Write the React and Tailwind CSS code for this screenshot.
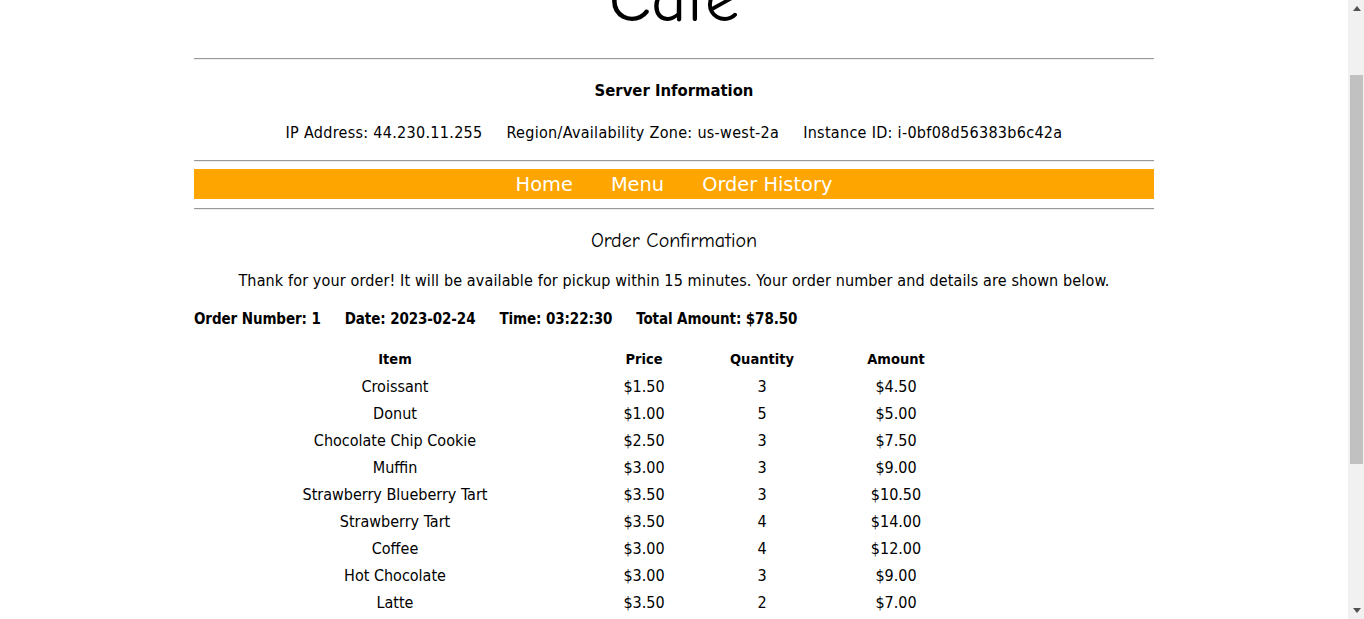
import React from "react";

const items = [
  ["Croissant", "$1.50", "3", "$4.50"],
  ["Donut", "$1.00", "5", "$5.00"],
  ["Chocolate Chip Cookie", "$2.50", "3", "$7.50"],
  ["Muffin", "$3.00", "3", "$9.00"],
  ["Strawberry Blueberry Tart", "$3.50", "3", "$10.50"],
  ["Strawberry Tart", "$3.50", "4", "$14.00"],
  ["Coffee", "$3.00", "4", "$12.00"],
  ["Hot Chocolate", "$3.00", "3", "$9.00"],
  ["Latte", "$3.50", "2", "$7.00"],
];

function Rule() {
  return <div className="h-[2px] border-t border-[#9a9a9a] border-b border-b-[#eeeeee]" />;
}

function Scrollbar() {
  return (
    <div className="w-[16px] shrink-0 h-full bg-[#f1f1f1] flex flex-col">
      <div className="h-[17px] flex items-center justify-center pl-[1px]">
        <svg width="8" height="5" viewBox="0 0 8 5"><path d="M0 5 L4 0 L8 5 Z" fill="#505050" /></svg>
      </div>
      <div className="flex-1 pl-[2px] pr-[1px]">
        <div className="mt-[58px] h-[389px] bg-[#c1c1c1]" />
      </div>
      <div className="h-[17px] flex items-center justify-center pl-[1px]">
        <svg width="8" height="5" viewBox="0 0 8 5"><path d="M0 0 L8 0 L4 5 Z" fill="#505050" /></svg>
      </div>
    </div>
  );
}

export default function App() {
  return (
    <div className="h-[619px] flex overflow-hidden bg-white text-black font-['DejaVu_Sans_Condensed','DejaVu_Sans',sans-serif]">
      <div className="flex-1 min-w-0 overflow-hidden">
        <div className="w-[960px] mx-auto">
          <div className="h-[58px] overflow-hidden flex flex-col items-center justify-end pb-[25px]">
            <h1 className="shrink-0 text-[69px] leading-[69px] font-['Comic_Sans_MS','Comic_Neue',cursive]">Cafe</h1>
          </div>
          <Rule />
          <div className="mt-[19px] text-center text-[16.5px] leading-[24px] font-bold">Server Information</div>
          <div className="mt-[20px] flex justify-center gap-6 text-[16px] leading-[20px] tracking-[0.3px]">
            <span>IP Address: 44.230.11.255</span>
            <span>Region/Availability Zone: us-west-2a</span>
            <span>Instance ID: i-0bf08d56383b6c42a</span>
          </div>
          <div className="mt-[17px]"><Rule /></div>
          <nav className="mt-[7px] h-[30px] pt-[2px] bg-[#ffa500] flex items-center justify-center gap-[38px] text-[19.4px] text-white font-['DejaVu_Sans',sans-serif]">
            <a href="#">Home</a>
            <a href="#">Menu</a>
            <a href="#">Order History</a>
          </nav>
          <div className="mt-[9px]"><Rule /></div>
          <h2 className="mt-[19px] text-center text-[20px] leading-[24px] font-['Comic_Sans_MS','Comic_Neue',cursive]">Order Confirmation</h2>
          <p className="mt-[18px] text-center text-[16px] leading-[20px] tracking-[0.13px]">
            Thank for your order! It will be available for pickup within 15 minutes. Your order number and details are shown below.
          </p>
          <div className="mt-[18px] flex gap-6 text-[15px] leading-[20px] font-bold tracking-[-0.1px]">
            <span>Order Number: 1</span>
            <span>Date: 2023-02-24</span>
            <span>Time: 03:22:30</span>
            <span>Total Amount: $78.50</span>
          </div>
          <div className="mt-[17px] text-[16px]">
            <div className="grid grid-cols-[402px_96px_140px_128px] h-[27px] items-center text-center font-bold text-[14.5px]">
              <div>Item</div>
              <div>Price</div>
              <div>Quantity</div>
              <div>Amount</div>
            </div>
            {items.map((r) => (
              <div key={r[0]} className="grid grid-cols-[402px_96px_140px_128px] h-[27px] items-center text-center">
                {r.map((c, i) => (
                  <div key={i}>{c}</div>
                ))}
              </div>
            ))}
          </div>
        </div>
      </div>
      <Scrollbar />
    </div>
  );
}
